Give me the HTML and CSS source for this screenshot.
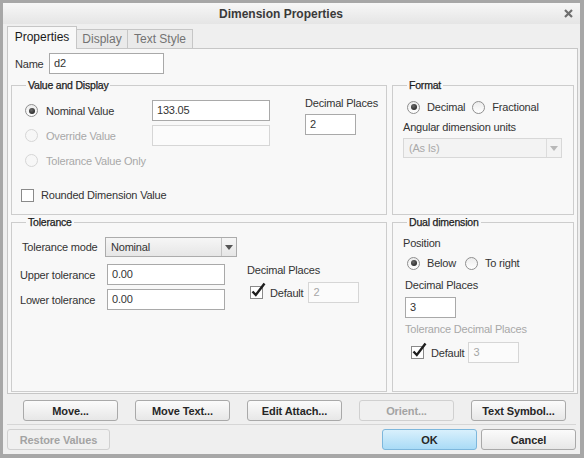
FILE: index.html
```html
<!DOCTYPE html>
<html lang="en">
<head>
    <meta charset="UTF-8">
    <meta name="viewport" content="width=device-width, initial-scale=1.0">
    <title>Dimension Properties</title>
    <link rel="stylesheet" href="styles.css">
</head>
<body>
    <div class="dialog">
        <div class="titlebar">
            <div class="title">Dimension Properties</div>
            <div class="close">
                <svg width="9" height="9" viewBox="0 0 9 9">
                    <path d="M1 1 L8 8 M8 1 L1 8" stroke="#6e6e6e" stroke-width="2.2" fill="none"/>
                </svg>
            </div>
        </div>

        <div class="tabs">
            <div class="tab active">Properties</div>
            <div class="tab tab-display">Display</div>
            <div class="tab tab-style">Text Style</div>
        </div>

        <div class="panel">
            <div class="name-row">
                <label class="name-label">Name</label>
                <div class="field name-field">d2</div>
            </div>

            <div class="group-row top-row">
                <fieldset class="group group-wide">
                    <legend>Value and Display</legend>
                    <div class="vd">
                        <div class="vd-left">
                            <div class="vd-grid">
                                <div class="option"><span class="radio checked"></span><span>Nominal Value</span></div>
                                <div class="field value-field">133.05</div>
                                <div class="option disabled"><span class="radio"></span><span>Override Value</span></div>
                                <div class="field value-field off"></div>
                                <div class="option disabled"><span class="radio"></span><span>Tolerance Value Only</span></div>
                                <div></div>
                            </div>
                            <div class="check-row rounded">
                                <span class="checkbox"></span><span>Rounded Dimension Value</span>
                            </div>
                        </div>
                        <div class="vd-decimals">
                            <div class="text-line">Decimal Places</div>
                            <div class="field small-field decimals-field">2</div>
                        </div>
                    </div>
                </fieldset>

                <fieldset class="group group-narrow">
                    <legend>Format</legend>
                    <div class="format">
                        <div class="radio-row">
                            <span class="radio checked"></span><span class="radio-text">Decimal</span>
                            <span class="radio"></span><span class="radio-text">Fractional</span>
                        </div>
                        <div class="text-line angular-label">Angular dimension units</div>
                        <div class="select off angular-select">
                            <span class="select-text">(As Is)</span>
                            <span class="select-arrow"><span class="arrow"></span></span>
                        </div>
                    </div>
                </fieldset>
            </div>

            <div class="group-row bottom-row">
                <fieldset class="group group-wide">
                    <legend>Tolerance</legend>
                    <div class="tol">
                        <div class="tol-mode">
                            <span class="tol-mode-label">Tolerance mode</span>
                            <div class="select mode-select">
                                <span class="select-text">Nominal</span>
                                <span class="select-arrow"><span class="arrow"></span></span>
                            </div>
                        </div>
                        <div class="tol-body">
                            <div class="tol-fields">
                                <div class="tol-row">
                                    <span class="tol-label">Upper tolerance</span>
                                    <div class="field tol-field">0.00</div>
                                </div>
                                <div class="tol-row lower">
                                    <span class="tol-label">Lower tolerance</span>
                                    <div class="field tol-field">0.00</div>
                                </div>
                            </div>
                            <div class="tol-decimals">
                                <div class="text-line">Decimal Places</div>
                                <div class="check-row default-row">
                                    <span class="checkbox checked">
                                        <svg width="17" height="17" viewBox="0 0 17 17">
                                            <path d="M3.5 9.5 L6.8 13 L15.5 1.5" stroke="#1e1e1e" stroke-width="2.4" fill="none"/>
                                        </svg>
                                    </span>
                                    <span class="default-text">Default</span>
                                    <div class="field small-field off">2</div>
                                </div>
                            </div>
                        </div>
                    </div>
                </fieldset>

                <fieldset class="group group-narrow">
                    <legend>Dual dimension</legend>
                    <div class="dual">
                        <div class="text-line">Position</div>
                        <div class="radio-row dual-radios">
                            <span class="radio checked"></span><span class="radio-text below-text">Below</span>
                            <span class="radio"></span><span class="radio-text">To right</span>
                        </div>
                        <div class="text-line dual-decimal-label">Decimal Places</div>
                        <div class="field small-field dual-decimal-field">3</div>
                        <div class="text-line dual-tol-label">Tolerance Decimal Places</div>
                        <div class="check-row dual-default">
                            <span class="checkbox checked">
                                <svg width="17" height="17" viewBox="0 0 17 17">
                                    <path d="M3.5 9.5 L6.8 13 L15.5 1.5" stroke="#1e1e1e" stroke-width="2.4" fill="none"/>
                                </svg>
                            </span>
                            <span class="default-text">Default</span>
                            <div class="field small-field off">3</div>
                        </div>
                    </div>
                </fieldset>
            </div>
        </div>

        <div class="actions">
            <button class="btn">Move...</button>
            <button class="btn">Move Text...</button>
            <button class="btn">Edit Attach...</button>
            <button class="btn" disabled>Orient...</button>
            <button class="btn">Text Symbol...</button>
        </div>

        <div class="separator"></div>

        <div class="footer">
            <button class="btn restore" disabled>Restore Values</button>
            <div class="spacer"></div>
            <button class="btn primary">OK</button>
            <button class="btn">Cancel</button>
        </div>
    </div>
</body>
</html>
```

FILE: styles.css
```css
body {
    margin: 0;
    font-family: "Liberation Sans", Arial, sans-serif;
    font-size: 11px;
    letter-spacing: -0.2px;
    color: #333;
}

.dialog {
    width: 584px;
    height: 458px;
    box-sizing: border-box;
    border: 3px solid #a7a7a7;
    border-right-width: 4px;
    border-bottom-width: 4px;
    background: #efefef;
    display: flex;
    flex-direction: column;
}

/* title bar */
.titlebar {
    height: 21px;
    flex-shrink: 0;
    display: flex;
    align-items: center;
    background: linear-gradient(#f7f7f7, #e5e5e5);
}

.title {
    flex: 1;
    text-align: center;
    font-size: 12px;
    font-weight: bold;
    letter-spacing: 0;
    color: #3a3a3a;
}

.close {
    width: 19px;
    display: flex;
    justify-content: center;
    padding-right: 2px;
}

.close svg {
    display: block;
}

/* tabs */
.tabs {
    display: flex;
    align-items: flex-end;
    height: 23px;
    margin-top: 2px;
    margin-bottom: -1px;
    padding-left: 4px;
    position: relative;
    z-index: 1;
}

.tab {
    box-sizing: border-box;
    height: 20px;
    line-height: 18px;
    text-align: center;
    font-size: 12px;
    letter-spacing: 0;
    color: #737373;
    background: #eaeaea;
    border: 1px solid #c6c6c6;
    border-left: none;
}

.tab.active {
    width: 70px;
    height: 23px;
    line-height: 21px;
    color: #1a1a1a;
    background: #f8f8f8;
    border-left: 1px solid #c6c6c6;
    border-bottom: none;
}

.tab-display {
    width: 51px;
}

.tab-style {
    width: 65px;
}

/* tab page */
.panel {
    box-sizing: border-box;
    height: 346px;
    flex-shrink: 0;
    margin: 0 2px 0 4px;
    padding: 0 3px;
    background: #f8f8f8;
    border: 1px solid #c6c6c6;
}

.field {
    box-sizing: border-box;
    height: 21px;
    line-height: 19px;
    padding-left: 4px;
    background: #fff;
    border: 1px solid #a9a9a9;
    color: #333;
}

.field.off {
    border-color: #d6d6d6;
    color: #a6a6a6;
    background: #fbfbfb;
}

.small-field {
    width: 51px;
}

.name-row {
    display: flex;
    align-items: center;
    margin-top: 4px;
    padding-left: 4px;
}

.name-label {
    width: 34px;
}

.name-field {
    width: 115px;
}

.group-row {
    display: flex;
    gap: 5px;
}

.top-row {
    margin-top: 5px;
}

.top-row .group {
    height: 136px;
}

.bottom-row {
    margin-top: 1px;
}

.bottom-row .group {
    height: 176px;
}

.group {
    box-sizing: border-box;
    margin: 0;
    padding: 0;
    min-width: 0;
    border: 1px solid #cdcdcd;
}

.group legend {
    margin-left: 14px;
    padding: 0 2px;
    font-size: 10.5px;
    line-height: 12px;
    color: #1c1c1c;
    -webkit-text-stroke: 0.25px #1c1c1c;
}

.group-wide {
    width: 376px;
}

.group-narrow {
    width: 182px;
}

.text-line {
    line-height: 14px;
}

/* radio buttons and check boxes */
.radio {
    box-sizing: border-box;
    width: 13px;
    height: 13px;
    flex-shrink: 0;
    border-radius: 50%;
    border: 1px solid #8f8f8f;
    background: linear-gradient(#ececec, #fff);
    display: inline-flex;
    align-items: center;
    justify-content: center;
}

.radio.checked::after {
    content: "";
    width: 6px;
    height: 6px;
    border-radius: 50%;
    background: radial-gradient(circle at 40% 35%, #6a6a6a, #151515);
}

.option {
    display: flex;
    align-items: center;
    gap: 8px;
}

.option.disabled {
    color: #a8a8a8;
}

.option.disabled .radio {
    border-color: #d6d6d6;
    background: #f7f7f7;
}

.checkbox {
    box-sizing: border-box;
    width: 13px;
    height: 13px;
    flex-shrink: 0;
    border: 1px solid #8a8a8a;
    background: #fff;
    position: relative;
}

.checkbox svg {
    position: absolute;
    left: -2px;
    top: -5px;
}

.check-row {
    display: flex;
    align-items: center;
}

.radio-row {
    display: flex;
    align-items: center;
    height: 16px;
}

.radio-text {
    margin: 0 7px 0 7px;
}

/* value and display */
.vd {
    display: flex;
    padding: 7px 0 0 13px;
}

.vd-grid {
    display: grid;
    grid-template-columns: 127px 118px;
    grid-auto-rows: 25px;
    align-items: center;
}

.value-field {
    width: 118px;
}

.rounded {
    height: 24px;
    margin: 10px 0 0 -4px;
    gap: 7px;
}

.vd-decimals {
    margin-left: 35px;
    margin-top: -2px;
}

.decimals-field {
    margin-top: 4px;
}

/* format */
.format {
    padding: 8px 0 0 10px;
}

.format .radio-row {
    margin-left: 4px;
}

.angular-label {
    margin-top: 5px;
}

.select {
    box-sizing: border-box;
    height: 20px;
    display: flex;
    border: 1px solid #acacac;
    background: linear-gradient(#f6f6f6, #e6e6e6);
}

.select-text {
    flex: 1;
    line-height: 18px;
    padding-left: 5px;
}

.select-arrow {
    width: 14px;
    border-left: 1px solid #c4c4c4;
    display: flex;
    align-items: center;
    justify-content: center;
}

.arrow {
    width: 0;
    height: 0;
    border-left: 4px solid transparent;
    border-right: 4px solid transparent;
    border-top: 5px solid #555;
}

.select.off {
    border-color: #d8d8d8;
    background: #f3f3f3;
    color: #a9a9a9;
}

.select.off .select-arrow {
    border-left-color: #dcdcdc;
}

.select.off .arrow {
    border-top-color: #b8b8b8;
}

.angular-select {
    width: 159px;
    margin-top: 4px;
}

/* tolerance */
.tol {
    padding: 9px 0 0 10px;
}

.tol-mode {
    display: flex;
    align-items: center;
}

.tol-mode-label {
    width: 83px;
}

.mode-select {
    width: 132px;
}

.tol-body {
    display: flex;
    margin-top: 7px;
}

.tol-fields {
    margin-left: -2px;
}

.tol-row {
    display: flex;
    align-items: center;
}

.tol-row.lower {
    margin-top: 4px;
}

.tol-label {
    width: 87px;
}

.tol-field {
    width: 118px;
}

.tol-decimals {
    margin-left: 22px;
    margin-top: -1px;
}

.default-row {
    margin: 5px 0 0 3px;
}

.default-text {
    margin: 0 5px 0 7px;
}

/* dual dimension */
.dual {
    padding: 8px 0 0 10px;
}

.dual-radios {
    margin: 5px 0 0 4px;
}

.below-text {
    margin-right: 9px;
}

.dual-decimal-label {
    margin: 7px 0 0 2px;
}

.dual-decimal-field {
    margin: 5px 0 0 2px;
}

.dual-tol-label {
    margin: 4px 0 0 2px;
    color: #a8a8a8;
}

.dual-default {
    margin: 6px 0 0 8px;
}

.dual-default .default-text {
    margin-right: 4px;
}

/* buttons */
.btn {
    box-sizing: border-box;
    width: 95px;
    height: 21px;
    padding: 0;
    font-family: "Liberation Sans", Arial, sans-serif;
    font-size: 11px;
    font-weight: bold;
    letter-spacing: -0.1px;
    color: #262626;
    border: 1px solid #a9a9a9;
    border-radius: 3px;
    background: linear-gradient(#fbfbfb, #e7e7e7);
}

.btn:disabled {
    color: #a3a3a3;
    border-color: #d0d0d0;
    background: #f0f0f0;
}

.btn.primary {
    border-color: #7db7dc;
    background: linear-gradient(#d9f0fc, #a9dbf6);
}

.actions {
    display: flex;
    gap: 17px;
    margin-top: 6px;
    padding-left: 20px;
}

.separator {
    height: 1px;
    margin: 3px 4px 0;
    background: #d6d6d6;
}

.footer {
    display: flex;
    gap: 4px;
    margin-top: 4px;
    padding: 0 4px;
}

.restore {
    width: 103px;
}

.spacer {
    flex: 1;
}
```
